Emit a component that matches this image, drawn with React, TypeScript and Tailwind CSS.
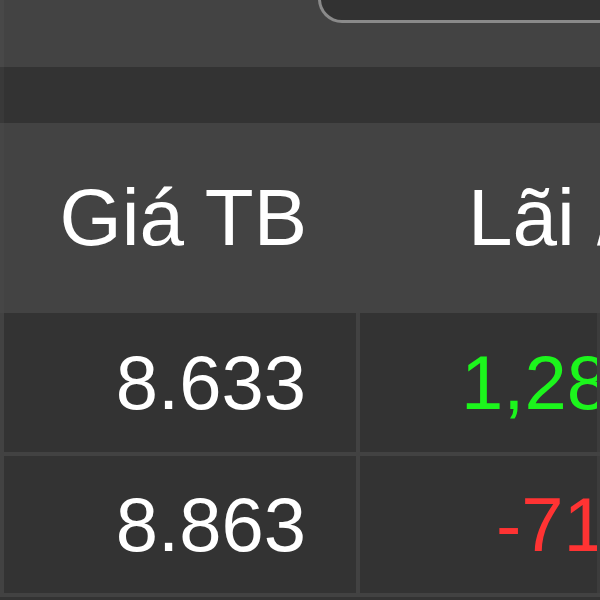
const rows = [
  { avg: "8.633", pnl: "1,284,500", up: true, pad: "pl-[101px]" },
  { avg: "8.863", pnl: "-712,300", up: false, pad: "pl-[136px]" },
];

export default function App() {
  return (
    <div className="w-[600px] h-[600px] overflow-hidden bg-[#333333] font-['Liberation_Sans',Arial,sans-serif] text-white">
      {/* toolbar strip with the tab panel corner */}
      <div className="h-[67px] bg-[#434343] border-l-4 border-[#484848] flex justify-end">
        <div className="w-[282px] h-[24px] -mt-px bg-[#323232] border-l-[3px] border-b-[3px] border-[#8a8a8a] rounded-bl-[24px]" />
      </div>
      <div className="h-[56px] bg-[#333333] border-l-4 border-[#393939]" />

      {/* table header */}
      <div className="h-[190px] bg-[#434343] border-l-4 border-[#464646] flex items-center whitespace-nowrap">
        <div className="w-[356px] shrink-0 pr-[53px] text-right text-[80px] leading-none">Giá TB</div>
        <div className="shrink-0 pl-[108px] text-[80px] leading-none">Lãi / Lỗ</div>
      </div>

      {/* rows */}
      {rows.map((r, i) => (
        <div
          key={r.avg}
          className={`flex border-l-4 border-b-4 border-[#424242] whitespace-nowrap ${i === 0 ? "h-[143px]" : "h-[141px]"}`}
        >
          <div className="w-[356px] shrink-0 border-r-4 border-[#424242] pr-[50px] flex items-center justify-end text-[76px] leading-none">
            {r.avg}
          </div>
          <div
            className={`w-[241px] shrink-0 overflow-hidden border-r-4 border-[#3c3c3c] flex items-center text-[76px] leading-none ${r.pad} ${
              r.up ? "text-[#1cf51c]" : "text-[#ff3333]"
            }`}
          >
            {r.pnl}
          </div>
        </div>
      ))}
    </div>
  );
}
